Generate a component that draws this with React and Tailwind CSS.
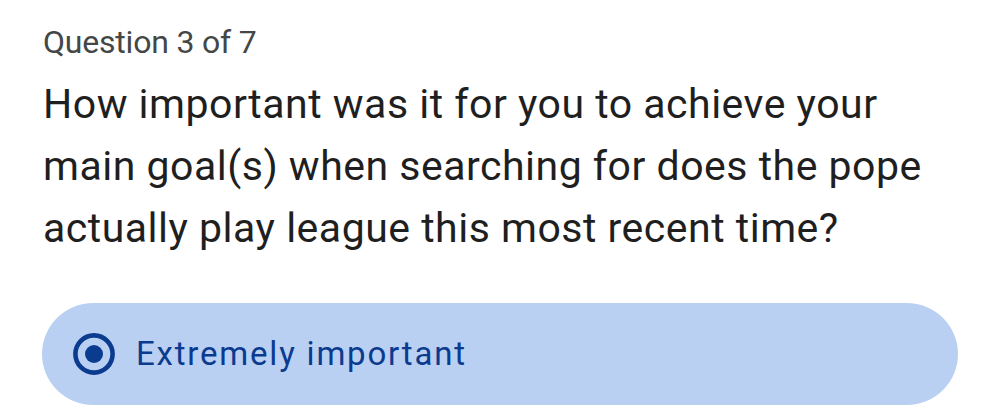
import React from 'react';

const App = () => {
    return (
        <div className="w-[1000px] h-[414px] bg-white overflow-hidden" style={{ fontFamily: 'Roboto, "Noto Sans", sans-serif' }}>
            <div className="pl-[42px] pr-[42px] pt-[23px]">
                <p className="pl-[1px] text-[32px] leading-[38px] text-[#444746] tracking-[-0.2px]">Question 3 of 7</p>
                <h1 className="mt-[12px] pl-[1px] max-w-[905px] text-[41px] leading-[62px] text-[#1f1f1f] tracking-[0.5px]">
                    How important was it for you to achieve your main goal(s) when searching for does the pope actually play league this most recent time?
                </h1>

                {/* Selected option */}
                <div className="mt-[44px] h-[102px] rounded-full bg-[#b9d0f3] flex items-center pl-[31px]">
                    <svg width="42" height="42" viewBox="0 0 42 42" className="shrink-0">
                        <circle cx="21" cy="21" r="18.6" fill="none" stroke="#0b3b8f" strokeWidth="4.6" />
                        <circle cx="21" cy="21" r="9" fill="#0b3b8f" />
                    </svg>
                    <span className="ml-[21px] text-[33px] tracking-[1.8px] text-[#0b3b8f]">Extremely important</span>
                </div>
            </div>
        </div>
    );
};

export default App;
